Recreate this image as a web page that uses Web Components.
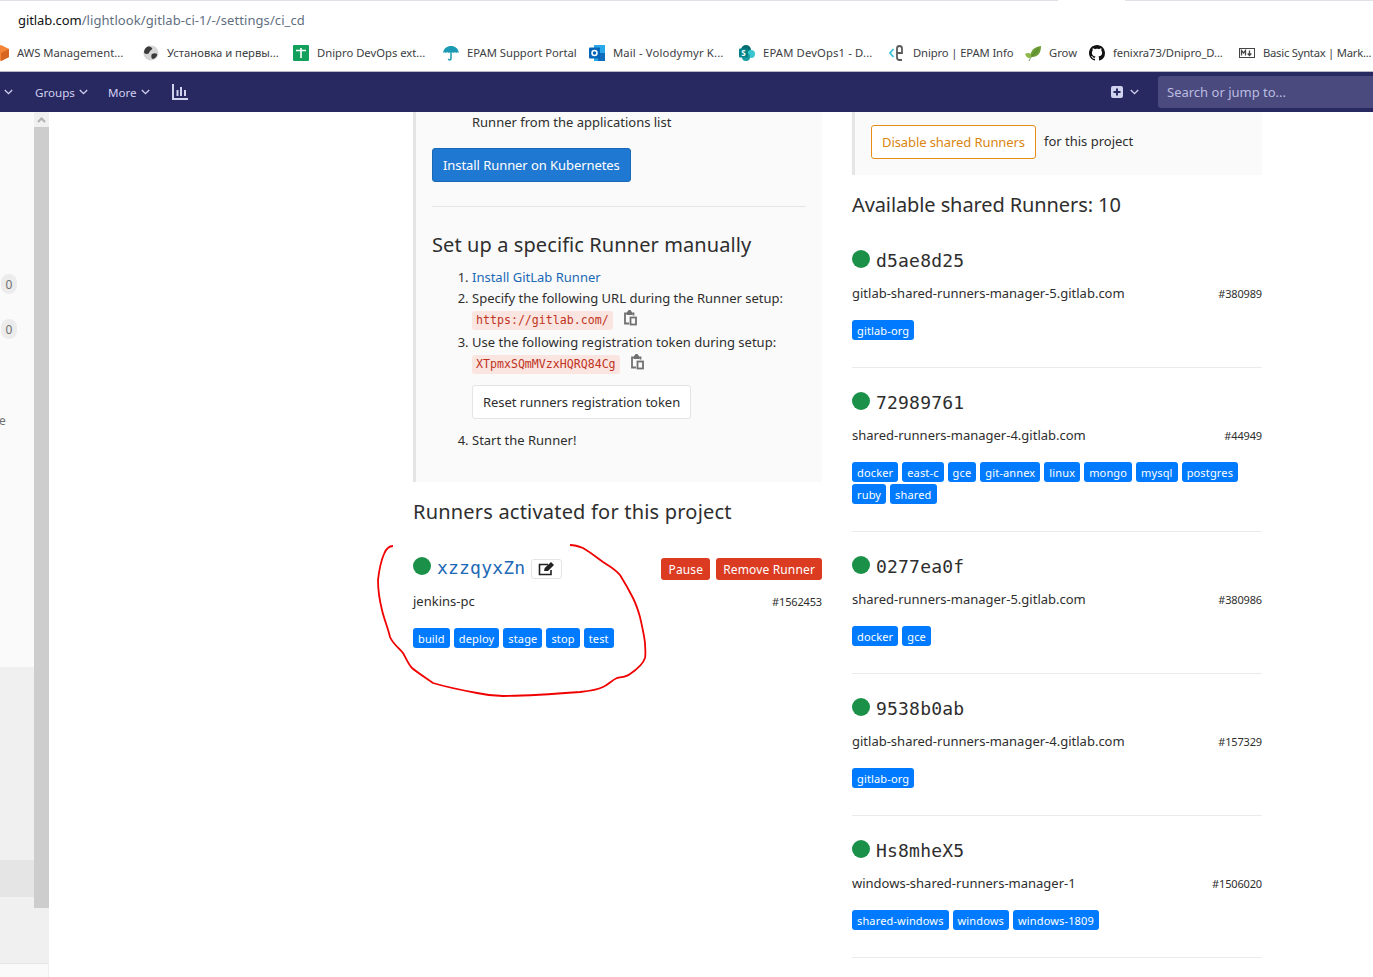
<!DOCTYPE html>
<html lang="en">
<head>
<meta charset="utf-8">
<title>CI / CD Settings</title>
<style>
    html, body { margin: 0; height: 100%; overflow: hidden; background: #fff; }
    body { font-family: "Noto Sans", "Open Sans", sans-serif; color: #2e2e2e; font-size: 13px; }
    .page { display: flex; flex-direction: column; height: 977px; position: relative; overflow: hidden; }
</style>
</head>
<body>
<div class="page">
    <browser-chrome>
        <book-mark icon="aws" w="150" first>AWS Management...</book-mark>
        <book-mark icon="globe" w="150">Установка и первы...</book-mark>
        <book-mark icon="sheet" w="150">Dnipro DevOps ext...</book-mark>
        <book-mark icon="umbrella" w="146">EPAM Support Portal</book-mark>
        <book-mark icon="outlook" w="150" style="letter-spacing:.15px">Mail - Volodymyr K...</book-mark>
        <book-mark icon="share" w="150" style="letter-spacing:.15px">EPAM DevOps1 - D...</book-mark>
        <book-mark icon="epam" w="136" style="letter-spacing:-.12px">Dnipro | EPAM Info</book-mark>
        <book-mark icon="leaf" w="64">Grow</book-mark>
        <book-mark icon="github" w="150" style="letter-spacing:-.1px">fenixra73/Dnipro_D...</book-mark>
        <book-mark icon="md" w="134" style="letter-spacing:-.25px">Basic Syntax | Mark...</book-mark>
    </browser-chrome>
    <top-nav></top-nav>
    <settings-view>
        <side-rail slot="rail"></side-rail>

        <setup-panel slot="left"></setup-panel>
        <section-title slot="left" style="margin-top:15px;letter-spacing:.2px">Runners activated for this project</section-title>
        <runner-card slot="left" name="xzzqyxZn" host="jenkins-pc" num="#1562453" link first>
            <runner-tag>build</runner-tag><runner-tag>deploy</runner-tag><runner-tag>stage</runner-tag><runner-tag>stop</runner-tag><runner-tag>test</runner-tag>
        </runner-card>

        <shared-panel slot="right"></shared-panel>
        <section-title slot="right" style="margin-top:15px;margin-bottom:28px;letter-spacing:-.1px">Available shared Runners: 10</section-title>
        <runner-card slot="right" name="d5ae8d25" host="gitlab-shared-runners-manager-5.gitlab.com" num="#380989" first>
            <runner-tag>gitlab-org</runner-tag>
        </runner-card>
        <runner-card slot="right" name="72989761" host="shared-runners-manager-4.gitlab.com" num="#44949">
            <runner-tag>docker</runner-tag><runner-tag>east-c</runner-tag><runner-tag>gce</runner-tag><runner-tag>git-annex</runner-tag><runner-tag>linux</runner-tag><runner-tag>mongo</runner-tag><runner-tag>mysql</runner-tag><runner-tag>postgres</runner-tag><runner-tag>ruby</runner-tag><runner-tag>shared</runner-tag>
        </runner-card>
        <runner-card slot="right" name="0277ea0f" host="shared-runners-manager-5.gitlab.com" num="#380986">
            <runner-tag>docker</runner-tag><runner-tag>gce</runner-tag>
        </runner-card>
        <runner-card slot="right" name="9538b0ab" host="gitlab-shared-runners-manager-4.gitlab.com" num="#157329">
            <runner-tag>gitlab-org</runner-tag>
        </runner-card>
        <runner-card slot="right" name="Hs8mheX5" host="windows-shared-runners-manager-1" num="#1506020" last>
            <runner-tag>shared-windows</runner-tag><runner-tag>windows</runner-tag><runner-tag>windows-1809</runner-tag>
        </runner-card>
    </settings-view>

    <svg style="position:absolute;left:0;top:0;pointer-events:none" width="1373" height="977" fill="none">
        <path d="M393 546C389 546 386 549 384 554C381 561 379 571 378 580C378 592 380 602 382 610C384 619 388 628 390 637C393 644 399 648 403 653C406 658 408 664 412 668C418 673 426 678 433 683C446 687 461 690 477 693C486 695 494 696 503 696C528 696 555 694 580 692C589 691 597 690 603 687C608 685 612 680 617 678C622 677 626 677 630 674C636 670 643 664 645 658C646 653 645 648 645 643C644 634 642 626 640 617C638 610 636 604 633 598C629 590 625 583 620 575C615 569 609 566 603 562C596 557 590 552 583 548C578 546 574 545 570 545" stroke="#f00000" stroke-width="1.8"/>
    </svg>
</div>

<script>
const ICONS = {
    aws: `<path d="M8 0l8 4v8l-8 4-8-4V4z" fill="#f58536"/><path d="M8 8l8-4v8l-8 4z" fill="#d9661f"/>`,
    globe: `<circle cx="8" cy="8" r="7.6" fill="#d6d6d6"/><path d="M4 2c2-1 4 0 5 1s-1 2-2 3-1 3-3 3-3-1-3-2 1-4 3-5zM9 9c2-1 4-1 5 0s-2 5-4 5-2-4-1-5z" fill="#3a3a3a"/>`,
    sheet: `<rect width="16" height="16" rx="1" fill="#12a05c"/><path d="M3 5.500h10M8 3v10" stroke="#fff" stroke-width="1.600" fill="none"/>`,
    umbrella: `<path d="M0 8C1 3 4 1 8 1s7 2 8 7c-1-1-2-1-2.700 0-1-1-2.300-1-3 0-.8-1-3.800-1-4.600 0-.7-1-2-1-3 0C2 7 1 7 0 8z" fill="#1b9ab3"/><path d="M8 7v6.500c0 2-2.500 2-2.500.3" stroke="#1b9ab3" stroke-width="1.500" fill="none"/>`,
    outlook: `<path d="M5 0h11v16H5z" fill="#28a8ea"/><path d="M9 8h7v8H9z" fill="#0f6cbd"/><rect y="2.500" width="11" height="11" rx="1" fill="#0364b8"/><circle cx="5.500" cy="8" r="2.500" fill="none" stroke="#fff" stroke-width="1.500"/>`,
    share: `<circle cx="7" cy="5" r="5" fill="#036c70"/><circle cx="12" cy="9" r="4" fill="#37c6d0"/><circle cx="7" cy="12" r="4" fill="#1a9ba1"/><rect y="3.500" width="9" height="9" rx="1" fill="#038387"/><text x="4.500" y="11" font-size="8" font-weight="700" text-anchor="middle" fill="#fff" font-family="Noto Sans, sans-serif">S</text>`,
    epam: `<path d="M4.500 4L1 8l3.500 4" stroke="#39c2d7" stroke-width="1.800" fill="none"/><path d="M8 8h5V3.500C13 1.500 12 1 10.500 1S8 1.500 8 3.500V12.500C8 14.500 9 15 10.500 15H13" stroke="#5a5a5a" stroke-width="1.800" fill="none"/>`,
    leaf: `<path d="M0 9c3-2 6-1 7 1 0 3-5 5-7-1z" fill="#8fb84a"/><path d="M6 11C5 6 9 2 16 1c0 7-3 11-9 11z" fill="#6b9b35"/><path d="M4 16c1-3 5-7 9-12" stroke="#4b7a22" stroke-width=".8" fill="none"/>`,
    github: `<path fill="#111" d="M8 0C3.580 0 0 3.580 0 8c0 3.540 2.290 6.530 5.470 7.590.400.070.550-.170.550-.380 0-.190-.010-.820-.010-1.490-2.010.370-2.530-.490-2.690-.940-.090-.230-.480-.940-.820-1.130-.280-.150-.680-.520-.010-.530.630-.010 1.080.580 1.230.820.720 1.210 1.870.870 2.330.660.070-.520.280-.870.510-1.070-1.780-.200-3.640-.890-3.640-3.950 0-.870.310-1.590.820-2.150-.080-.200-.360-1.020.080-2.120 0 0 .670-.210 2.200.820.640-.180 1.320-.270 2-.270.680 0 1.360.090 2 .270 1.530-1.040 2.200-.820 2.200-.820.440 1.100.160 1.920.080 2.120.510.560.820 1.270.820 2.150 0 3.070-1.870 3.750-3.650 3.950.290.250.540.730.540 1.480 0 1.070-.010 1.930-.010 2.200 0 .210.150.460.550.380A8.013 8.013 0 0016 8c0-4.420-3.580-8-8-8z"/>`,
    md: `<rect x=".5" y="3.500" width="15" height="9" fill="none" stroke="#444"/><path d="M2.500 10.500v-5l2 2.400 2-2.400v5M10.500 5.500v4.500M8.700 8.500l1.800 2 1.800-2" stroke="#444" stroke-width="1.300" fill="none"/>`
};

class BrowserChrome extends HTMLElement {
    constructor() {
        super();
        this.attachShadow({mode: 'open'}).innerHTML = `
            <style>
                :host { display: block; flex: none; background: #fff; }
                .strip { height: 1px; background: linear-gradient(to right, #dee1e6 1058px, #fff 1058px, #fff 1125px, #dee1e6 1125px); }
                .address { height: 34px; display: flex; align-items: center; padding-left: 18px; padding-top: 3px; box-sizing: border-box; font-size: 13px; color: #5f6f7f; letter-spacing: .08px; }
                .address b { font-weight: 400; color: #111; letter-spacing: -.08px; }
                .bar { height: 37px; display: flex; align-items: center; padding-bottom: 2px; box-sizing: border-box; margin-left: -7px; border-bottom: 1px solid #b8b8c8; white-space: nowrap; overflow: hidden; }
            </style>
            <div class="strip"></div>
            <div class="address"><span><b>gitlab.com</b>/lightlook/gitlab-ci-1/-/settings/ci_cd</span></div>
            <div class="bar"><slot></slot></div>
        `;
    }
}

class BookMark extends HTMLElement {
    constructor() {
        super();
        const icon = ICONS[this.getAttribute('icon')] || '';
        this.attachShadow({mode: 'open'}).innerHTML = `
            <style>
                :host { display: inline-flex; align-items: center; gap: 8px; flex: none; width: ${this.getAttribute('w')}px; font-size: 11.25px; color: #3c4043; }
                svg { flex: none; margin-top: 2px; }
            </style>
            <svg width="16" height="16" viewBox="0 0 16 16">${icon}</svg><slot></slot>
        `;
    }
}

class TopNav extends HTMLElement {
    constructor() {
        super();
        const chev = `<svg class="chev" width="9" height="6" viewBox="0 0 9 6" fill="none"><path d="M.8 1l3.700 3.700L8.200 1" stroke="#d1d1f0" stroke-width="1.300"/></svg>`;
        this.attachShadow({mode: 'open'}).innerHTML = `
            <style>
                :host { display: flex; flex: none; height: 40px; background: #292961; color: #d1d1f0; font-size: 11.6px; align-items: center; }
                .item { display: flex; align-items: center; gap: 4px; }
                .chev { flex: none; }
                .spacer { flex: 1; }
                .search { width: 215px; height: 32px; margin-left: 19px; background: #4a4a7e; border-radius: 3px 0 0 3px; color: #bcbce0; font-size: 13px; display: flex; align-items: center; padding-left: 9px; box-sizing: border-box; }
            </style>
            <span class="item" style="margin-left:4px">${chev}</span>
            <span class="item" style="margin-left:22px">Groups ${chev}</span>
            <span class="item" style="margin-left:20px">More ${chev}</span>
            <svg style="margin-left:22px" width="16" height="16" viewBox="0 0 16 16" fill="none"><path d="M1 0v15h15" stroke="#d1d1f0" stroke-width="2"/><path d="M5.500 6v6M9 3v9M13 6v6" stroke="#d1d1f0" stroke-width="2"/></svg>
            <span class="spacer"></span>
            <svg style="margin-right:-1px" width="12" height="12" viewBox="0 0 12 12"><rect width="12" height="12" rx="2" fill="#d1d1f0"/><path d="M6 2.500v7M2.500 6h7" stroke="#292961" stroke-width="2"/></svg>
            <span style="margin-left:8px;display:flex">${chev}</span>
            <div class="search">Search or jump to...</div>
        `;
    }
}

class SettingsView extends HTMLElement {
    constructor() {
        super();
        this.attachShadow({mode: 'open'}).innerHTML = `
            <style>
                :host { display: flex; flex: 1; min-height: 0; overflow: hidden; }
                .main { flex: 1; display: grid; grid-template-columns: 409px 410px; column-gap: 30px; padding-left: 364px; align-items: start; }
                .col { display: flex; flex-direction: column; min-width: 0; }
            </style>
            <slot name="rail"></slot>
            <div class="main">
                <div class="col"><slot name="left"></slot></div>
                <div class="col"><slot name="right"></slot></div>
            </div>
        `;
    }
}

class SideRail extends HTMLElement {
    constructor() {
        super();
        this.attachShadow({mode: 'open'}).innerHTML = `
            <style>
                :host { display: flex; flex: none; width: 49px; height: 865px; }
                .nav { width: 34px; overflow: hidden; display: flex; flex-direction: column; background: #fafafa; color: #707070; font-size: 12px; }
                .top { height: 555px; padding-top: 162px; box-sizing: border-box; }
                .badge { width: 16px; height: 20px; margin-left: 1px; margin-bottom: 25px; background: #ececec; border-radius: 10px; display: flex; align-items: center; justify-content: center; font-size: 12px; }
                .clip { margin-top: 75px; margin-left: -1px; line-height: 14px; }
                .band1 { height: 193px; background: #f0f0f0; }
                .band2 { height: 37px; background: #e5e5e5; }
                .band3 { height: 66px; background: #f0f0f0; }
                .band4 { flex: 1; background: #fafafa; border-top: 1px solid #e5e5e5; }
                .scroll { width: 15px; display: flex; flex-direction: column; background: #f0f0f0; }
                .up { height: 15px; display: flex; align-items: center; justify-content: center; }
                .thumb { height: 781px; background: #cdcdcd; }
                .rest { height: 55px; }
                .foot { flex: 1; background: #fafafa; border-top: 1px solid #e5e5e5; border-right: 1px solid #eeeeee; }
            </style>
            <div class="nav">
                <div class="top">
                    <div class="badge">0</div>
                    <div class="badge">0</div>
                    <div class="clip">e</div>
                </div>
                <div class="band1"></div>
                <div class="band2"></div>
                <div class="band3"></div>
                <div class="band4"></div>
            </div>
            <div class="scroll">
                <div class="up"><svg width="9" height="6" viewBox="0 0 9 6" fill="none"><path d="M1 5l3.500-3.500L8 5" stroke="#b0b0b0" stroke-width="2"/></svg></div>
                <div class="thumb"></div>
                <div class="rest"></div>
                <div class="foot"></div>
            </div>
        `;
    }
}

class SetupPanel extends HTMLElement {
    constructor() {
        super();
        const copy = `<svg class="copy" width="13" height="16" viewBox="0 0 13 16" fill="none"><path d="M8 3.500h1.500v2M3 3.500H1v10h4" stroke="#707070" stroke-width="1.800"/><rect x="3" y="1.500" width="5" height="3.500" fill="#707070"/><rect x="4" y="0" width="3" height="3" rx="1" fill="#707070"/><rect x="6.500" y="7.500" width="5.500" height="7" stroke="#707070" stroke-width="1.800"/></svg>`;
        this.attachShadow({mode: 'open'}).innerHTML = `
            <style>
                :host { display: block; background: #fafafa; border-left: 3px solid #e5e5e5; padding: 0 16px 31px 16px; font-size: 13px; line-height: 21px; color: #2e2e2e; }
                .intro { padding-left: 40px; height: 20px; }
                .install { display: inline-flex; align-items: center; height: 34px; box-sizing: border-box; margin-top: 16px; padding: 0 10px; background: #1f78d1; border: 1px solid #1b69b6; border-radius: 3px; color: #fff; letter-spacing: -.07px; }
                hr { border: 0; border-top: 1px solid #e5e5e5; margin: 24px 0 0; }
                h4 { font-size: 20px; font-weight: 400; line-height: 26px; margin: 25px 0 9px; color: #2e2e2e; letter-spacing: .09px; }
                ol { margin: 0; padding-left: 40px; }
                a { color: #1b69b6; text-decoration: none; }
                li { line-height: 21px; }
                .line { display: flex; align-items: center; gap: 11px; height: 23px; }
                .line code { font-family: "DejaVu Sans Mono", monospace; font-size: 11.6px; color: #c0341d; background: #fbe5e1; border-radius: 3px; padding: 0 4px; line-height: 19px; }
                .copy { position: relative; top: -3px; }
                .reset { display: inline-flex; align-items: center; height: 34px; box-sizing: border-box; margin: 9px 0 11px; padding: 0 10px; background: #fff; border: 1px solid #e5e5e5; border-radius: 3px; letter-spacing: -.03px; }
            </style>
            <div class="intro">Runner from the applications list</div>
            <span class="install">Install Runner on Kubernetes</span>
            <hr>
            <h4>Set up a specific Runner manually</h4>
            <ol>
                <li><a>Install GitLab Runner</a></li>
                <li>Specify the following URL during the Runner setup:
                    <div class="line"><code>https://gitlab.com/</code>${copy}</div></li>
                <li>Use the following registration token during setup:
                    <div class="line"><code>XTpmxSQmMVzxHQRQ84Cg</code>${copy}</div>
                    <span class="reset">Reset runners registration token</span></li>
                <li>Start the Runner!</li>
            </ol>
        `;
    }
}

class SharedPanel extends HTMLElement {
    constructor() {
        super();
        this.attachShadow({mode: 'open'}).innerHTML = `
            <style>
                :host { display: flex; align-items: center; gap: 8px; background: #fafafa; border-left: 3px solid #e5e5e5; padding: 13px 16px 16px; font-size: 13px; }
                .btn { display: inline-flex; align-items: center; height: 34px; box-sizing: border-box; padding: 0 10px; background: #fff; border: 1px solid #e78c19; border-radius: 3px; color: #d9850f; letter-spacing: -.09px; }
                .tail { margin-bottom: 2px; }
            </style>
            <span class="btn">Disable shared Runners</span><span class="tail">for this project</span>
        `;
    }
}

class SectionTitle extends HTMLElement {
    constructor() {
        super();
        this.attachShadow({mode: 'open'}).innerHTML = `
            <style>
                :host { display: block; font-size: 20px; line-height: 30px; color: #2e2e2e; }
            </style>
            <slot></slot>
        `;
    }
}

class RunnerCard extends HTMLElement {
    constructor() {
        super();
        const isLink = this.hasAttribute('link');
        this.attachShadow({mode: 'open'}).innerHTML = `
            <style>
                :host { display: block; font-size: 13px; border-top: 1px solid #eaeaea; padding-top: 22px; }
                :host([first]) { border-top: 0; padding-top: 0; }
                :host([link]) { margin-top: 28px; }
                :host([last]) { border-bottom: 1px solid #eaeaea; }
                :host([link]) .meta { margin-top: 12px; }
                .head { display: flex; align-items: center; height: 24px; }
                .dot { width: 18px; height: 18px; border-radius: 50%; background: #1a9048; margin-right: 6px; flex: none; position: relative; top: -1px; }
                .name { font-family: "DejaVu Sans Mono", monospace; font-size: 18px; letter-spacing: .2px; color: ${isLink ? '#1b69b6' : '#2e2e2e'}; }
                .edit { display: ${isLink ? 'flex' : 'none'}; align-items: center; justify-content: center; width: 31px; height: 20px; box-sizing: border-box; margin-left: 6px; border: 1px solid #e5e5e5; border-radius: 3px; background: #fff; position: relative; top: 2px; }
                .acts { display: ${isLink ? 'flex' : 'none'}; margin-left: auto; margin-top: 4px; gap: 6px; }
                .acts span { display: flex; align-items: center; height: 22px; padding: 0 7px; background: #db3b21; border-radius: 3px; color: #fff; font-size: 12px; letter-spacing: .15px; }
                .meta { display: flex; justify-content: space-between; align-items: center; height: 20px; margin-top: 11px; }
                .num { font-size: 11px; letter-spacing: -.15px; }
                .tags { display: flex; flex-wrap: wrap; gap: 2px 4px; margin-top: 17px; margin-bottom: 27px; }
            </style>
            <div class="head">
                <span class="dot"></span>
                <span class="name">${this.getAttribute('name')}</span>
                <span class="edit"><svg width="17" height="14" viewBox="0 0 17 14" fill="none"><path d="M13 8v4.500H1.500V2.500H10" stroke="#222" stroke-width="1.600"/><path d="M6 9l.7-3L13 0l3 3-6 6z" fill="#222"/></svg></span>
                <span class="acts"><span>Pause</span><span>Remove Runner</span></span>
            </div>
            <div class="meta"><span>${this.getAttribute('host')}</span><span class="num">${this.getAttribute('num')}</span></div>
            <div class="tags"><slot></slot></div>
        `;
    }
}

class RunnerTag extends HTMLElement {
    constructor() {
        super();
        this.attachShadow({mode: 'open'}).innerHTML = `
            <style>
                :host { display: inline-flex; align-items: center; height: 20px; padding: 0 5px; background: #007bff; border-radius: 3px; color: #fff; font-size: 11px; letter-spacing: .15px; }
            </style>
            <slot></slot>
        `;
    }
}

customElements.define('browser-chrome', BrowserChrome);
customElements.define('book-mark', BookMark);
customElements.define('top-nav', TopNav);
customElements.define('settings-view', SettingsView);
customElements.define('side-rail', SideRail);
customElements.define('setup-panel', SetupPanel);
customElements.define('shared-panel', SharedPanel);
customElements.define('section-title', SectionTitle);
customElements.define('runner-card', RunnerCard);
customElements.define('runner-tag', RunnerTag);
</script>
</body>
</html>
